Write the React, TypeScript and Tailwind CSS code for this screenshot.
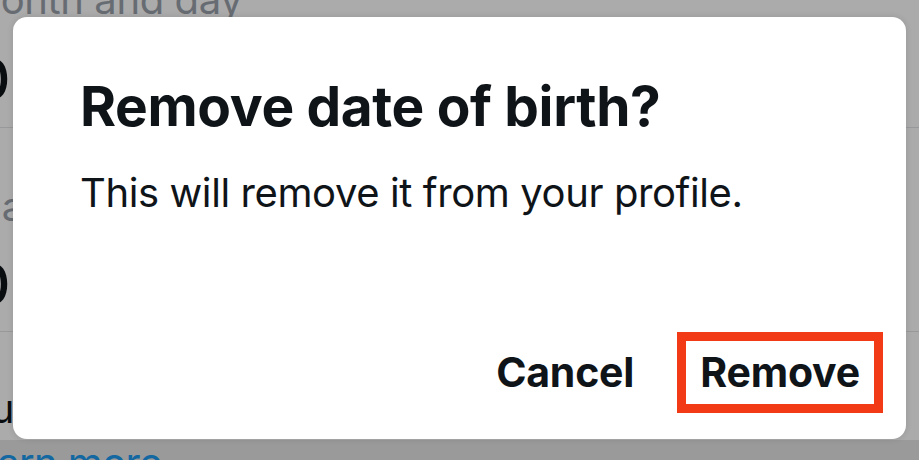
import React from "react";

function BackgroundPage() {
  return (
    <div className="flex flex-col whitespace-nowrap">
      <div className="-mt-[24px] -ml-[35px] h-[48px] text-[40px] leading-[48px] tracking-[-0.4px] text-[#9aa2ac]">
        Month and day
      </div>
      <div className="mt-[26px] -ml-[27px] h-[58px] text-[58px] leading-[58px] font-medium text-[#0f1419]">
        0
      </div>
      <div className="mt-[19px] h-px bg-[#e1e4e8]" />
      <div className="mt-[55px] -ml-[46px] h-[48px] text-[40px] leading-[48px] text-[#9aa2ac]">
        Year
      </div>
      <div className="mt-[24px] -ml-[27px] h-[58px] text-[58px] leading-[58px] font-medium text-[#0f1419]">
        0
      </div>
      <div className="mt-[18px] h-px bg-[#e1e4e8]" />
      <div className="mt-[53px] -ml-[55px] h-[48px] text-[40px] leading-[48px] text-[#0f1419]">
        you
      </div>
      <div className="mt-[7px] h-[60px] bg-[#e6e6e6] pt-[3px]">
        <div className="-ml-[48px] text-[40px] leading-[40px] tracking-[-0.6px] text-[#1d9bf0]">
          Learn more
        </div>
      </div>
    </div>
  );
}

export default function App() {
  return (
    <div className="relative h-[460px] w-[919px] overflow-hidden bg-white font-['Inter','Noto_Sans',sans-serif]">
      <BackgroundPage />

      {/* dim mask behind the dialog */}
      <div className="absolute inset-0 bg-black/[0.33]" />

      <div
        role="dialog"
        className="absolute left-[13px] top-[17px] flex h-[422px] w-[893px] flex-col rounded-[14px] bg-white shadow-[0_0_6px_rgba(0,0,0,0.12)]"
      >
        <div className="px-[67px] pt-[62px]">
          <h2 className="text-[55px] leading-[55px] font-bold tracking-[-0.35px] text-[#0f1419]">
            Remove date of birth?
          </h2>
          <p className="mt-[39px] text-[40px] leading-[40px] tracking-[-0.4px] text-[#0f1419]">
            This will remove it from your profile.
          </p>
        </div>

        <div className="mt-auto flex items-center justify-end gap-[43px] pr-[23px] pb-[26px]">
          <button className="text-[41px] leading-[41px] font-bold tracking-[-0.2px] text-[#0f1419]">
            Cancel
          </button>
          <button className="flex h-[81px] items-center border-[9px] border-[#f23a17] px-[14px] text-[41px] leading-[41px] font-bold tracking-[-0.2px] text-[#0f1419]">
            Remove
          </button>
        </div>
      </div>
    </div>
  );
}
